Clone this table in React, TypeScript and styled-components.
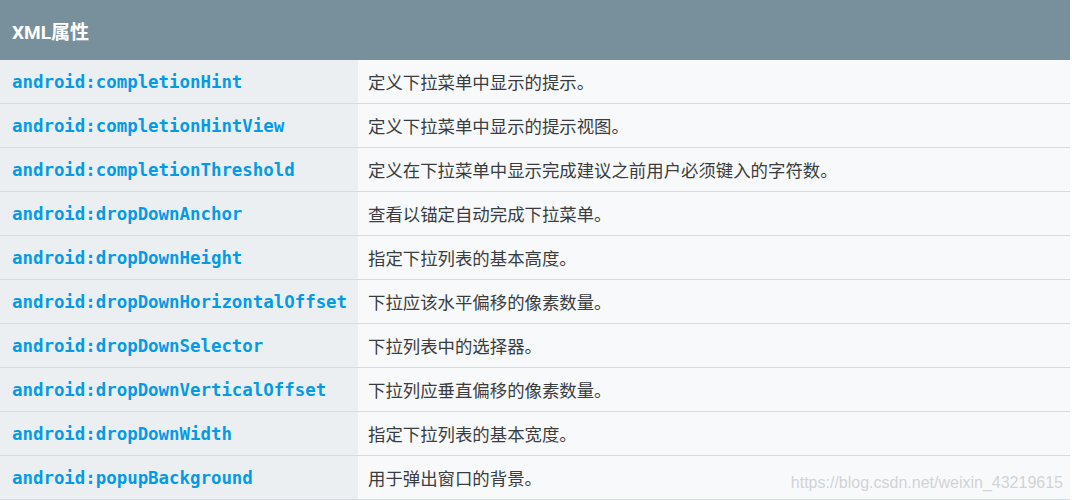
import styled, { createGlobalStyle } from 'styled-components';

const GlobalStyle = createGlobalStyle`
  html, body {
    margin: 0;
    padding: 0;
    background: #ffffff;
  }
  body {
    font-family: Roboto, "Noto Sans CJK SC", sans-serif;
  }
`;

const Page = styled.div`
  position: relative;
  width: 1072px;
  height: 500px;
  overflow: hidden;
  background: #ffffff;
`;

const Table = styled.div`
  width: 1070px;
  display: flex;
  flex-direction: column;
`;

const HeaderRow = styled.div`
  height: 60px;
  display: flex;
  align-items: center;
  padding: 0 12px;
  background-color: #78909c;
  color: #ffffff;
  font-family: Roboto, "Noto Sans CJK SC", sans-serif;
  font-weight: 700;
  font-size: 19px;
`;

const Row = styled.div`
  height: 44px;
  box-sizing: border-box;
  display: grid;
  grid-template-columns: 358px 1fr;
  border-bottom: 1px solid #d3dce0;
`;

const AttrCell = styled.div`
  background-color: #eceff1;
  display: flex;
  align-items: center;
  padding-left: 12px;
  color: #039be5;
  font-family: "DejaVu Sans Mono", "Liberation Mono", monospace;
  font-weight: 700;
  font-size: 17.4px;
  white-space: nowrap;
`;

const DescCell = styled.div`
  background-color: #f8f9fa;
  display: flex;
  align-items: center;
  padding-left: 10px;
  color: #3a3d40;
  font-family: "Noto Sans CJK SC", sans-serif;
  font-size: 17.4px;
  white-space: nowrap;
`;

const Watermark = styled.div`
  position: absolute;
  right: 9px;
  bottom: 8px;
  color: rgba(200, 204, 208, 0.85);
  font-family: "Liberation Sans", Arial, sans-serif;
  font-size: 16px;
`;

const attributes: [string, string][] = [
  ['android:completionHint', '定义下拉菜单中显示的提示。'],
  ['android:completionHintView', '定义下拉菜单中显示的提示视图。'],
  ['android:completionThreshold', '定义在下拉菜单中显示完成建议之前用户必须键入的字符数。'],
  ['android:dropDownAnchor', '查看以锚定自动完成下拉菜单。'],
  ['android:dropDownHeight', '指定下拉列表的基本高度。'],
  ['android:dropDownHorizontalOffset', '下拉应该水平偏移的像素数量。'],
  ['android:dropDownSelector', '下拉列表中的选择器。'],
  ['android:dropDownVerticalOffset', '下拉列应垂直偏移的像素数量。'],
  ['android:dropDownWidth', '指定下拉列表的基本宽度。'],
  ['android:popupBackground', '用于弹出窗口的背景。'],
];

const App = () => {
  return (
    <>
      <GlobalStyle />
      <Page>
        <Table>
          <HeaderRow>XML属性</HeaderRow>
          {attributes.map(([name, desc]) => (
            <Row key={name}>
              <AttrCell>{name}</AttrCell>
              <DescCell>{desc}</DescCell>
            </Row>
          ))}
        </Table>
        <Watermark>https://blog.csdn.net/weixin_43219615</Watermark>
      </Page>
    </>
  );
};

export default App;
